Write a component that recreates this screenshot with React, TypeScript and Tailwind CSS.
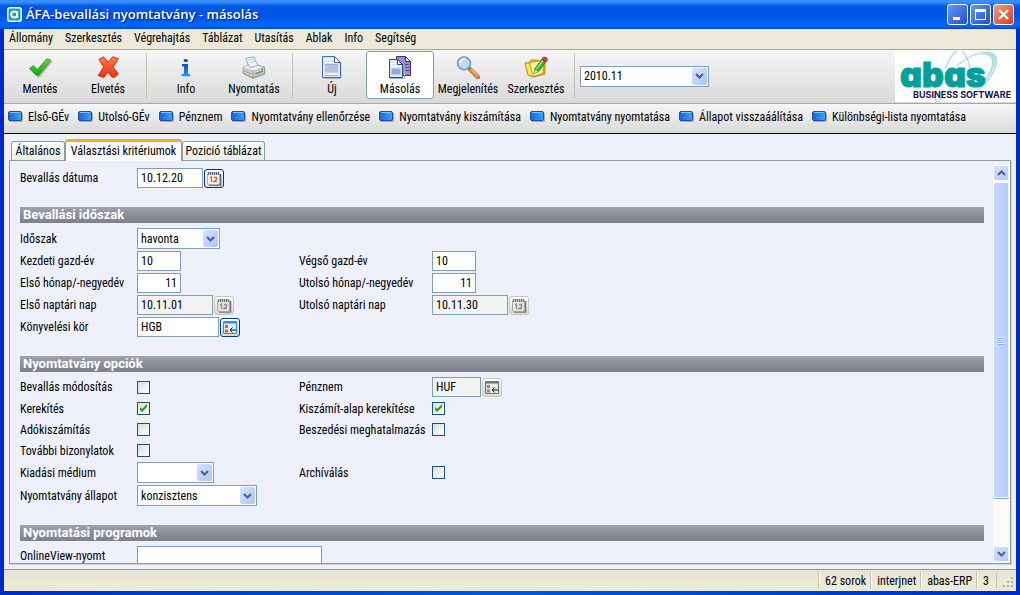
import React, { useId, useState } from "react";

/* ---------- icons ---------- */

function AppIcon() {
  return (
    <svg width="15" height="15" viewBox="0 0 15 15" aria-hidden="true">
      <rect width="15" height="15" rx="3" fill="#fff" />
      <rect x="1.500" y="1.500" width="12" height="12" rx="2" fill="#12a5a0" />
      <circle cx="7.200" cy="7.400" r="3" fill="none" stroke="#fff" strokeWidth="2" />
      <path d="M10.200 4v7" stroke="#fff" strokeWidth="2" />
    </svg>
  );
}

function SaveIcon() {
  return (
    <svg width="26" height="26" viewBox="0 0 26 26" aria-hidden="true">
      <defs>
        <linearGradient id="saveFill" x1="0" y1="0" x2="0" y2="1">
          <stop offset="0" stopColor="#5fd83a" />
          <stop offset="1" stopColor="#1c9f14" />
        </linearGradient>
      </defs>
      <path d="M3 13 7 10l4 4.600L20 3l5 1.500L12 20.500h-2z" fill="#888" opacity=".5" transform="translate(.8 1)" />
      <path d="M2.400 12.600 6.400 9.600l4 4L19.400 3q3-.4 4.600 1.400L11.600 19.600H9.400z" fill="url(#saveFill)" stroke="#2a9a1c" strokeWidth=".8" strokeLinejoin="round" />
    </svg>
  );
}

function DiscardIcon() {
  return (
    <svg width="26" height="26" viewBox="0 0 26 26" aria-hidden="true">
      <defs>
        <linearGradient id="discardFill" x1="0" y1="0" x2="0" y2="1">
          <stop offset="0" stopColor="#ff7a55" />
          <stop offset="1" stopColor="#e8330e" />
        </linearGradient>
      </defs>
      <path d="M5 3l4-2 4.500 6L18 .6l5 1.800-5 8.600 5.600 6.400-3.400 3.400h-2L13 15.400 8.600 21.800l-5-2.200 5.800-8.400z" fill="#888" opacity=".5" transform="translate(.6 1)" />
      <path d="M3.800 3.400 8.600.8l4.400 5.400L17.600.8l5.800 1.600-5.400 8.600 5.200 6.600-3.800 3.600h-2.400L12.800 16 8.600 21.400l-5.400-2 5.400-8.400z" fill="url(#discardFill)" stroke="#c6300f" strokeWidth=".9" strokeLinejoin="round" />
    </svg>
  );
}

function InfoIcon() {
  return (
    <svg width="26" height="26" viewBox="0 0 26 26" aria-hidden="true">
      <defs>
        <linearGradient id="infoFill" x1="0" y1="0" x2="0" y2="1">
          <stop offset="0" stopColor="#0a4fb8" />
          <stop offset="1" stopColor="#1c9bff" />
        </linearGradient>
      </defs>
      <ellipse cx="12.800" cy="4.500" rx="2.200" ry="1.600" fill="#0b49b0" />
      <path d="M9 8h6v10h2v2.200H8.600V18H11v-7.600H9z" fill="url(#infoFill)" />
    </svg>
  );
}

function PrintIcon() {
  return (
    <svg width="26" height="26" viewBox="0 0 26 26" aria-hidden="true">
      <path d="M3 13 14 10l10.500 3v5L12 22.400 3 18z" fill="#8e8e8e" opacity=".5" transform="translate(0 .8)" />
      <path d="M2 12 9 7.600l14.600 3.600v6L12 21.400 2 17.400z" fill="#cfcfcd" stroke="#8b8b88" strokeWidth=".8" />
      <path d="M2 12 9 7.600l14.600 3.600L12 15z" fill="#f3f3f1" stroke="#a4a4a0" strokeWidth=".6" />
      <path d="M5 2 13 .8q1.400 5 4.400 8.400L9 11.800Q5.800 7.400 5 2z" fill="#e9f2fd" stroke="#7d9cc4" strokeWidth=".8" />
      <path d="M7.500 4l5-1M9 6.600l5-1.200" stroke="#b9cdea" strokeWidth=".8" />
      <path d="M12 15v6.200M3.400 15l6.800 2.800" stroke="#9a9a94" strokeWidth="1" fill="none" />
      <path d="M14 17.800l8-2.800" stroke="#7b7b76" strokeWidth="1.400" />
      <circle cx="21.400" cy="13" r="1" fill="#4cc42e" />
    </svg>
  );
}

function NewIcon() {
  return (
    <svg width="26" height="26" viewBox="0 0 26 26" aria-hidden="true">
      <path d="M5 22.500h17V7" stroke="#b4b4b4" fill="none" />
      <path d="M3.500.5h12l6 6v15h-18z" fill="#dbe5f5" stroke="#4a6a9c" />
      <path d="M15.500.5v6h6z" fill="#fff" stroke="#4a6a9c" />
      <path d="M5.500 3.500h8M5.500 6.500h8M5.500 18.500h14" stroke="#fff" />
      <path d="M6 8.500h13v8H6z" fill="#b4c2dd" />
      <path d="M6 8.500h13M6 19.500h13" stroke="#9aaed2" />
    </svg>
  );
}

function CopyIcon() {
  return (
    <svg width="26" height="26" viewBox="0 0 26 26" aria-hidden="true">
      <path d="M9.500.5h9l5 5v14h-14z" fill="#9c8bc4" stroke="#3d2f78" />
      <path d="M18.500.5v5h5z" fill="#e6dff5" stroke="#3d2f78" />
      <path d="M18 8.500h4M18 11.500h4M18 14.500h4" stroke="#5b4a98" />
      <path d="M3 22.500h14.500V9" stroke="#aaa" fill="none" />
      <path d="M2.500 3.500h8l5 5v13h-13z" fill="#dbe5f5" stroke="#284e8c" />
      <path d="M10.500 3.500v5h5z" fill="#fff" stroke="#284e8c" />
      <path d="M4 10.500h10M4 7.500h5" stroke="#fff" />
      <path d="M4.500 12.500h9v6h-9z" fill="#93abd6" />
    </svg>
  );
}

function ViewIcon() {
  return (
    <svg width="26" height="26" viewBox="0 0 26 26" aria-hidden="true">
      <path d="M14.800 13l8 8" stroke="#9a6a4a" strokeWidth="4.400" strokeLinecap="round" />
      <path d="M14.800 12.600l7.600 7.600" stroke="#ff8a3c" strokeWidth="3.200" strokeLinecap="round" />
      <path d="M16.400 13.400l5.400 5.400" stroke="#ffd0a0" strokeWidth="1" />
      <path d="M13 11l2.400 2.400" stroke="#777" strokeWidth="2.600" />
      <circle cx="9" cy="7.400" r="6.400" fill="#b4dcf8" stroke="#8796a3" strokeWidth="1.600" />
      <path d="M5 7a4.400 4.400 0 0 1 5-4.200" stroke="#fff" strokeWidth="1.600" fill="none" />
    </svg>
  );
}

function EditIcon() {
  return (
    <svg width="26" height="26" viewBox="0 0 26 26" aria-hidden="true">
      <path d="M2 7h4l2-3h5l9 2v12l-11 3-6-2z" fill="#e5b912" stroke="#a77f06" strokeWidth=".8" />
      <path d="M6.500 6.500 20 4.500v13L8.500 21z" fill="#fff3a3" stroke="#b8900e" strokeWidth=".8" />
      <path d="M2 7h4.500l4 14-5.500-2z" fill="#ffe45c" stroke="#b8900e" strokeWidth=".8" />
      <path d="M11 17.500l1-5L19 3l4 2.600-7.200 9.600z" fill="#3cb82c" stroke="#1a6e14" strokeWidth=".8" />
      <path d="M13.400 13 20 4.200" stroke="#a4ee8c" strokeWidth="1.200" />
      <path d="M18.600 3.400 20.400 1q3.600-.2 4 2.400L22.800 6z" fill="#e8402c" stroke="#8e1c10" strokeWidth=".7" />
      <path d="M11 17.500l1-4 3 2z" fill="#f3d9a8" />
    </svg>
  );
}

function CommandIcon() {
  return (
    <svg width="15" height="11" viewBox="0 0 15 11" aria-hidden="true" className="shrink-0">
      <defs>
        <linearGradient id="cmdFill" x1="0" y1="0" x2="1" y2="0">
          <stop offset="0" stopColor="#1668d8" />
          <stop offset="1" stopColor="#3ca4f6" />
        </linearGradient>
      </defs>
      <rect x="1" y="1.500" width="14" height="9.500" rx="1.500" fill="#aaa" />
      <rect x=".5" y=".5" width="13" height="9" rx="1.500" fill="url(#cmdFill)" stroke="#1c4f9e" />
      <path d="M2 1.500h10" stroke="#7cc0fb" />
    </svg>
  );
}

function CalendarIcon({ active }: { active: boolean }) {
  const ink = active ? "#f0561c" : "#8d8d8d";
  const edge = active ? "#56617c" : "#777";
  return (
    <svg width="16" height="15" viewBox="0 0 16 15" aria-hidden="true">
      <path d="M3 14h11.500V3" stroke={edge} strokeWidth="1.600" fill="none" />
      <rect x="1.500" y="2" width="12" height="11.500" rx="1.500" fill={active ? "#f6f8fd" : "#e4e4e0"} stroke={active ? "#a3b0cc" : "#a5a5a0"} />
      <path d="M2.500 1v3M4.500 1v3M6.500 1v3M8.500 1v3M10.500 1v3M12.500 1v3" stroke={edge} strokeWidth="1.200" />
      <path d="M4 7l1.500-1v5M8 6.500h2.500v2L8 10.500h3" stroke={ink} strokeWidth="1.300" fill="none" />
    </svg>
  );
}

function LookupIcon({ active }: { active: boolean }) {
  const edge = active ? "#2c8cf0" : "#75756f";
  const mark = active ? "#f0561c" : "#8d8d88";
  return (
    <svg width="16" height="15" viewBox="0 0 16 15" aria-hidden="true">
      <rect x="1.500" y="1.500" width="13" height="12" rx="1" fill={active ? "#e6f0fd" : "#e8e8e4"} stroke={edge} strokeWidth="1.200" />
      <path d="M1 2.500h14" stroke={edge} strokeWidth="2" />
      <path d="M3 5h3v3H3zM3 9.500h3v3H3z" fill={mark} />
      <path d="M14 10H8M10.500 7.500L8 10l2.500 2.500" stroke="#111" strokeWidth="1" fill="none" />
    </svg>
  );
}

function Chevron({ up = false }: { up?: boolean }) {
  return (
    <svg width="9" height="6" viewBox="0 0 9 6" aria-hidden="true">
      <path d={up ? "M1 5l3.500-3.500L8 5" : "M1 1l3.500 3.500L8 1"} fill="none" stroke="#4d6185" strokeWidth="2" />
    </svg>
  );
}

function Logo() {
  return (
    <svg width="121" height="51" viewBox="0 0 121 51" role="img" aria-label="abas Business Software" className="shrink-0">
      <rect width="121" height="51" fill="#fff" />
      <g fill="none" stroke="#b5dfdf">
        <path d="M50 18C54 8 58 2 62 0M67 0c4 4 7 10 8 18M37 42q2 5 5 9M50 42q-3 6-8 9" strokeWidth="1.500" />
        <path d="M62 15C78 0 97-2 101 6c3 9-6 24-19 33" strokeWidth="1.500" />
        <path d="M84 4c12-5 18-1 17 5-1 10-10 22-19 28 9-9 15-19 15-26 0-6-5-8-13-7z" fill="#b5dfdf" stroke="none" />
      </g>
      <text x="5" y="36" fontFamily="Inter, sans-serif" fontWeight="900" fontSize="34" fill="#00a19c" stroke="#00a19c" strokeWidth="1" className="[font-feature-settings:'cv11']">abas</text>
      <text x="18" y="47" fontFamily="Inter, sans-serif" fontWeight="700" fontSize="9" fill="#14144c">BUSINESS SOFTWARE</text>
    </svg>
  );
}

/* ---------- form controls ---------- */

const fieldBorder = "border border-[#7f9db9]";

function Field({ label, value = "", width, right = false, locked = false, lookup }: {
  label: string; value?: string; width: string; right?: boolean; locked?: boolean; lookup?: "calendar" | "list";
}) {
  const id = useId();
  return (
    <>
      <label htmlFor={id} className="whitespace-nowrap">{label}</label>
      <div className="flex items-center gap-px">
        <input
          id={id}
          defaultValue={value}
          readOnly={locked}
          className={`h-5 shrink-0 ${fieldBorder} px-[3px] outline-none ${width} ${right ? "text-right" : ""} ${locked ? "bg-[#f3f3f3]" : "bg-white"}`}
        />
        {lookup && (
          <button
            type="button"
            disabled={locked}
            aria-label={`${label} kiválasztása`}
            className={`flex h-[19px] w-5 shrink-0 items-center justify-center rounded-[3px] border bg-gradient-to-b from-white to-[#dcdad0] ${locked ? "border-[#c9c7ba]" : "border-[#003c74]"}`}
          >
            {lookup === "calendar" ? <CalendarIcon active={!locked} /> : <LookupIcon active={!locked} />}
          </button>
        )}
      </div>
    </>
  );
}

function Combo({ id, value, width, label }: { id?: string; value: string; width: string; label?: string }) {
  return (
    <div className={`relative h-[21px] ${width}`}>
      <select id={id} aria-label={label} defaultValue={value} className={`block h-full w-full appearance-none bg-white pr-5 pl-[3px] outline-none ${fieldBorder}`}>
        <option value={value}>{value}</option>
      </select>
      <span className="pointer-events-none absolute inset-y-0.5 right-0.5 flex w-[15px] items-center justify-center rounded-[2px] bg-gradient-to-br from-[#d6e2fd] to-[#adc4f7]">
        <Chevron />
      </span>
    </div>
  );
}

function SelectField({ label, value, width }: { label: string; value: string; width: string }) {
  const id = useId();
  return (
    <>
      <label htmlFor={id} className="whitespace-nowrap">{label}</label>
      <Combo id={id} value={value} width={width} />
    </>
  );
}

function CheckField({ label, checked = false }: { label: string; checked?: boolean }) {
  const id = useId();
  return (
    <>
      <label htmlFor={id} className="whitespace-nowrap">{label}</label>
      <div className="grid w-[13px] items-center justify-items-center">
        <input
          id={id}
          type="checkbox"
          defaultChecked={checked}
          className="peer col-start-1 row-start-1 size-[13px] appearance-none border border-[#1c5180] bg-gradient-to-br from-[#dcdcd7] to-white"
        />
        <svg width="9" height="9" viewBox="0 0 9 9" aria-hidden="true" className="pointer-events-none invisible col-start-1 row-start-1 peer-checked:visible">
          <path d="M1 3v3l2 2 5-5V0L3 5z" fill="#21a121" />
        </svg>
      </div>
    </>
  );
}

function Section({ title, children }: { title: string; children: React.ReactNode }) {
  return (
    <section className="mt-[18px]">
      <h2 className="h-4 bg-gradient-to-b from-[#a0a3ad] via-[#8b8e98] to-[#7f828b] pl-[3px] font-[Roboto] text-[13px] leading-4 font-bold text-white">{title}</h2>
      <div className="mt-1 grid grid-cols-[117px_162px_133px_1fr] items-center">{children}</div>
    </section>
  );
}

const rowTall = "col-span-4 grid h-[22px] grid-cols-subgrid items-center";
const rowShort = "col-span-4 grid h-[21px] grid-cols-subgrid items-center";
const rowCombo = "col-span-4 grid h-[23px] grid-cols-subgrid items-center";

/* ---------- toolbar ---------- */

function ToolButton({ label, icon, pressed = false }: { label: string; icon: React.ReactNode; pressed?: boolean }) {
  return (
    <button
      type="button"
      aria-pressed={pressed}
      className={`flex h-12 w-[68px] shrink-0 flex-col items-center rounded-[3px] border pt-1 ${pressed ? "border-[#7f9db9] bg-white" : "border-transparent"}`}
    >
      {icon}
      <span className="leading-[14px] whitespace-nowrap">{label}</span>
    </button>
  );
}

function Separator() {
  return <div className="mt-0.5 mr-[5px] ml-1 h-[45px] w-px shrink-0 bg-[#c5c2b2]" />;
}

const menus = ["Állomány", "Szerkesztés", "Végrehajtás", "Táblázat", "Utasítás", "Ablak", "Info", "Segítség"];

const commands = [
  "Első-GÉv",
  "Utolsó-GÉv",
  "Pénznem",
  "Nyomtatvány ellenőrzése",
  "Nyomtatvány kiszámítása",
  "Nyomtatvány nyomtatása",
  "Állapot visszaáálítása",
  "Különbségi-lista nyomtatása",
];

const tabs = [
  { label: "Általános", width: "w-[54px]" },
  { label: "Választási kritériumok", width: "w-[117px]" },
  { label: "Pozició táblázat", width: "w-[83px]" },
];

const windowButton = "flex size-[21px] items-center justify-center rounded-[3px] border border-white";

export default function App() {
  const [tab, setTab] = useState(1);
  return (
    <div className="flex h-screen flex-col overflow-hidden bg-gradient-to-r from-[#0029c9] via-[#0055e5] to-[#0029c9] font-['Roboto_Condensed','Roboto',sans-serif] text-[12px] text-black">
      <header className="flex h-[29px] shrink-0 items-center gap-1 bg-[linear-gradient(to_bottom,#3a8cf5_0,#3a93ff_2px,#0058e6_6px,#0054e3_16px,#0066ff_24px,#0061f5_27px,#0040bb_29px)] pr-1.5 pl-[7px]">
        <AppIcon />
        <h1 className="flex-1 truncate font-['Open_Sans'] text-[13px] font-semibold text-white [text-shadow:1px_1px_1px_#0a1883]">
          ÁFA-bevallási nyomtatvány - másolás
        </h1>
        <div className="flex gap-0.5">
          <button type="button" aria-label="Kis méret" className={`${windowButton} bg-gradient-to-br from-[#6b95f2] to-[#1d4ed0]`}>
            <svg width="13" height="13" aria-hidden="true"><path d="M2 9h7v3H2z" fill="#fff" /></svg>
          </button>
          <button type="button" aria-label="Teljes méret" className={`${windowButton} bg-gradient-to-br from-[#6b95f2] to-[#1d4ed0]`}>
            <svg width="13" height="13" aria-hidden="true"><path d="M1 1h11v11H1zM2 4v7h9V4z" fill="#fff" fillRule="evenodd" /></svg>
          </button>
          <button type="button" aria-label="Bezárás" className={`${windowButton} bg-gradient-to-br from-[#f09a80] to-[#d63a12]`}>
            <svg width="13" height="13" aria-hidden="true"><path d="M2 2l9 9M11 2l-9 9" stroke="#fff" strokeWidth="2.200" /></svg>
          </button>
        </div>
      </header>

      <div className="mx-1 mb-1 flex min-h-0 flex-1 flex-col bg-[#edf0f9]">
        <nav className="flex h-5 shrink-0 items-center gap-3 bg-[#ece9d8] pb-0.5 pl-[5px]">
          {menus.map((m) => (
            <button key={m} type="button" className="leading-4">{m}</button>
          ))}
        </nav>

        <div className="flex h-[55px] shrink-0 items-start justify-between border-t border-b border-[#aca899] bg-gradient-to-b from-[#f6f6f6] to-[#dadada]">
          <div className="flex items-start pt-px pl-0.5">
            <ToolButton label="Mentés" icon={<SaveIcon />} />
            <ToolButton label="Elvetés" icon={<DiscardIcon />} />
            <Separator />
            <ToolButton label="Info" icon={<InfoIcon />} />
            <ToolButton label="Nyomtatás" icon={<PrintIcon />} />
            <Separator />
            <ToolButton label="Új" icon={<NewIcon />} />
            <ToolButton label="Másolás" icon={<CopyIcon />} pressed />
            <ToolButton label="Megjelenítés" icon={<ViewIcon />} />
            <ToolButton label="Szerkesztés" icon={<EditIcon />} />
            <Separator />
            <div className="flex h-12 items-center pt-0.5">
              <Combo label="Időszak választása" value="2010.11" width="w-[129px]" />
            </div>
          </div>
          <div className="pt-px"><Logo /></div>
        </div>

        <div className="flex h-[30px] shrink-0 items-center gap-[9px] border-b border-black bg-gradient-to-b from-[#f6f6f6] to-[#dadada] pb-1 pl-1">
          {commands.map((c) => (
            <button key={c} type="button" className="flex items-center gap-[5px] whitespace-nowrap">
              <CommandIcon />
              {c}
            </button>
          ))}
        </div>

        <main className="flex min-h-0 flex-1 flex-col px-[5px] pt-[5px] pb-[5px]">
          <div role="tablist" className="z-10 -mb-px flex shrink-0 items-end pl-0.5">
            {tabs.map((t, i) => (
              <button
                key={t.label}
                type="button"
                role="tab"
                aria-selected={tab === i}
                onClick={() => setTab(i)}
                className={
                  tab === i
                    ? `h-[22px] rounded-t-[3px] border-x border-t-[3px] border-x-[#919b9c] border-t-[#ffa52c] bg-[#fbfbfc] pb-0.5 whitespace-nowrap ${t.width}`
                    : `mb-px h-[19px] rounded-t-[3px] border border-b-0 border-[#919b9c] bg-gradient-to-b from-white to-[#ececE6] whitespace-nowrap ${t.width}`
                }
              >
                {t.label}
              </button>
            ))}
          </div>

          <div className="flex min-h-0 flex-1 border border-[#919b9c] shadow-[1px_1px_0_#d5d3c5]">
            <form className="min-w-0 flex-1 overflow-hidden pt-1.5 pr-[9px] pl-2.5" onSubmit={(e) => e.preventDefault()}>
              <div className="grid grid-cols-[117px_162px_133px_1fr]">
                <div className={rowTall}>
                  <Field label="Bevallás dátuma" value="10.12.20" width="w-[66px]" lookup="calendar" />
                </div>
              </div>

              <Section title="Bevallási időszak">
                <div className={rowCombo}>
                  <SelectField label="Időszak" value="havonta" width="w-[83px]" />
                </div>
                <div className={rowTall}>
                  <Field label="Kezdeti gazd-év" value="10" width="w-11" />
                  <Field label="Végső gazd-év" value="10" width="w-11" />
                </div>
                <div className={rowTall}>
                  <Field label="Első hónap/-negyedév" value="11" width="w-11" right />
                  <Field label="Utolsó hónap/-negyedév" value="11" width="w-11" right />
                </div>
                <div className={rowTall}>
                  <Field label="Első naptári nap" value="10.11.01" width="w-[76px]" locked lookup="calendar" />
                  <Field label="Utolsó naptári nap" value="10.11.30" width="w-[76px]" locked lookup="calendar" />
                </div>
                <div className={rowTall}>
                  <Field label="Könyvelési kör" value="HGB" width="w-[82px]" lookup="list" />
                </div>
              </Section>

              <Section title="Nyomtatvány opciók">
                <div className={rowTall}>
                  <CheckField label="Bevallás módosítás" />
                  <Field label="Pénznem" value="HUF" width="w-[49px]" locked lookup="list" />
                </div>
                <div className={rowShort}>
                  <CheckField label="Kerekítés" checked />
                  <CheckField label="Kiszámít-alap kerekítése" checked />
                </div>
                <div className={rowShort}>
                  <CheckField label="Adókiszámítás" />
                  <CheckField label="Beszedési meghatalmazás" />
                </div>
                <div className={rowShort}>
                  <CheckField label="További bizonylatok" />
                </div>
                <div className={rowCombo}>
                  <SelectField label="Kiadási médium" value="" width="w-[77px]" />
                  <CheckField label="Archíválás" />
                </div>
                <div className={rowCombo}>
                  <SelectField label="Nyomtatvány állapot" value="konzisztens" width="w-[120px]" />
                </div>
              </Section>

              <Section title="Nyomtatási programok">
                <div className={rowTall}>
                  <Field label="OnlineView-nyomt" width="w-[185px]" />
                </div>
              </Section>
            </form>

            <div className="mt-1 mr-px mb-px flex w-4 shrink-0 flex-col bg-[#fafaf7]">
              <button type="button" aria-label="Görgetés fel" className="flex h-4 shrink-0 items-center justify-center rounded-[2px] border border-white bg-gradient-to-br from-[#d6e2fd] to-[#b4c8f8]">
                <Chevron up />
              </button>
              <div className="mt-px flex flex-[315] flex-col items-center justify-center gap-px rounded-[2px] border border-white bg-gradient-to-r from-[#c8d6fb] to-[#b3cdfb] shadow-[0_1px_0_#8aa6d8]">
                <span className="h-px w-[7px] bg-[#eef4fe] shadow-[0_1px_0_#8cb0f8]" />
                <span className="h-px w-[7px] bg-[#eef4fe] shadow-[0_1px_0_#8cb0f8]" />
                <span className="h-px w-[7px] bg-[#eef4fe] shadow-[0_1px_0_#8cb0f8]" />
                <span className="h-px w-[7px] bg-[#eef4fe] shadow-[0_1px_0_#8cb0f8]" />
              </div>
              <div className="flex-[48]" />
              <button type="button" aria-label="Görgetés le" className="flex h-4 shrink-0 items-center justify-center rounded-[2px] border border-white bg-gradient-to-br from-[#d6e2fd] to-[#b4c8f8]">
                <Chevron />
              </button>
            </div>
          </div>
        </main>

        <footer className="flex h-[22px] shrink-0 items-center justify-end border-t border-[#919b9c] bg-gradient-to-b from-[#e4e2d3] via-[#ece9d8] to-[#ece9d8]">
          {["62 sorok", "interjnet", "abas-ERP", "3"].map((s) => (
            <span key={s} className="flex h-4 items-center border-l border-[#c5c2b2] pr-1 pl-1.5 shadow-[inset_1px_0_0_#fff] whitespace-nowrap">{s}</span>
          ))}
          <span className="ml-[3px] flex h-4 w-5 items-end justify-end border-l border-[#c5c2b2] pr-px">
            <svg width="12" height="12" viewBox="0 0 12 12" fill="#b8b4a3" aria-hidden="true">
              <path d="M8 0h2v2H8zM4 4h2v2H4zM8 4h2v2H8zM0 8h2v2H0zM4 8h2v2H4zM8 8h2v2H8z" />
            </svg>
          </span>
        </footer>
      </div>
    </div>
  );
}
